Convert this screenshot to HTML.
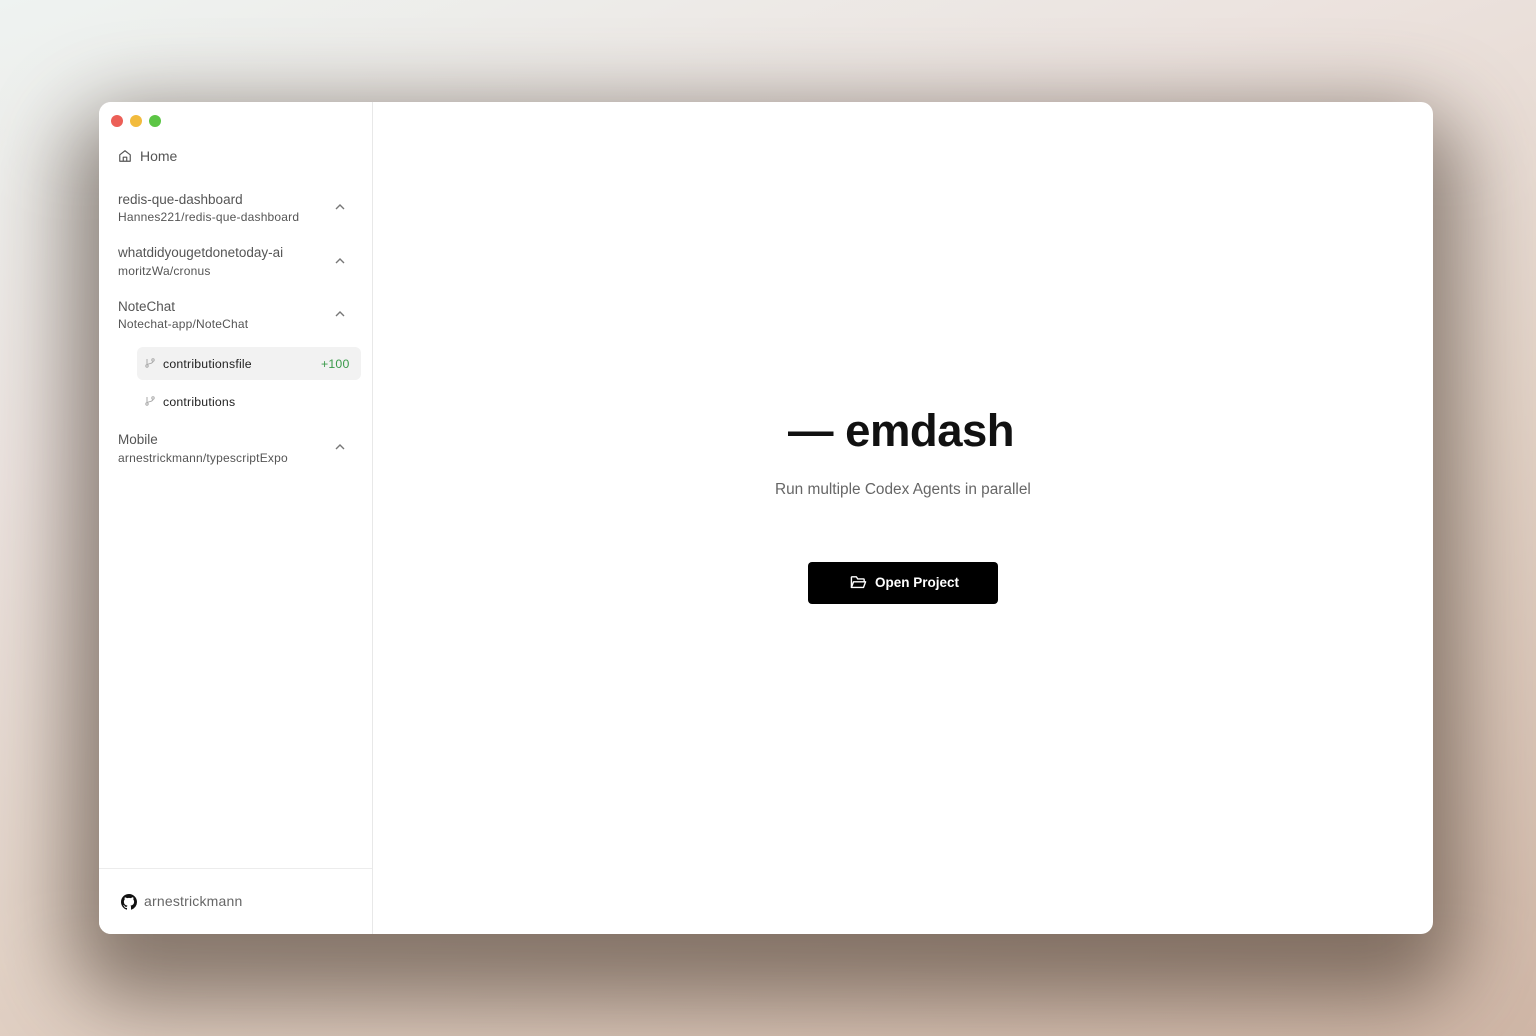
<!DOCTYPE html>
<html><head><meta charset="utf-8"><style>
html,body{margin:0;width:1536px;height:1036px;overflow:hidden;font-family:"Liberation Sans",sans-serif}
body{background:linear-gradient(160deg,#eef3f1 0%,#ece3df 30%,#e2d2c6 60%,#cfb6a6 100%);position:relative}
.shadow{position:absolute;left:70px;top:110px;width:1390px;height:890px;border-radius:60px;background:rgba(60,45,35,.55);filter:blur(40px)}
.win{position:absolute;left:99px;top:102px;width:1334px;height:832px;background:#fff;border-radius:12px;overflow:hidden}
.side{position:absolute;left:0;top:0;width:273px;height:832px;border-right:1px solid #e8e8e8;background:#fff}
.dot{position:absolute;top:13px;width:12px;height:12px;border-radius:50%}
.t{position:absolute;left:19px;color:#555;font-size:13.5px}
.s{position:absolute;left:19px;color:#555;font-size:12px;letter-spacing:0.2px}
.chev{position:absolute;left:236px;width:10px;height:6px}
.br{position:absolute;font-size:12.3px;color:#222;letter-spacing:0.2px}
</style></head><body>
<div class="shadow"></div>
<div class="win">
<div class="side">
<div class="dot" style="left:12px;background:#ec5f57"></div>
<div class="dot" style="left:31px;background:#f2bb3d"></div>
<div class="dot" style="left:50px;background:#5cc545"></div>
<svg style="position:absolute;left:19px;top:47px" width="14" height="14" viewBox="0 0 24 24" fill="none" stroke="#555" stroke-width="2" stroke-linejoin="round"><path d="M3 10l9-7 9 7v11H3z"/><path d="M9 21v-7h6v7"/></svg>
<div class="t" style="left:41px;top:46px;font-size:14px">Home</div>
<div class="t" style="top:90px">redis-que-dashboard</div>
<div class="s" style="top:108px">Hannes221/redis-que-dashboard</div>
<div class="t" style="top:143px">whatdidyougetdonetoday-ai</div>
<div class="s" style="top:162px">moritzWa/cronus</div>
<div class="t" style="top:197px">NoteChat</div>
<div class="s" style="top:215px">Notechat-app/NoteChat</div>
<div class="t" style="top:330px">Mobile</div>
<div class="s" style="top:349px">arnestrickmann/typescriptExpo</div>
<svg class="chev" style="top:102px" viewBox="0 0 10 6"><path d="M1 5l4-4 4 4" fill="none" stroke="#777" stroke-width="1.4"/></svg>
<svg class="chev" style="top:156px" viewBox="0 0 10 6"><path d="M1 5l4-4 4 4" fill="none" stroke="#777" stroke-width="1.4"/></svg>
<svg class="chev" style="top:209px" viewBox="0 0 10 6"><path d="M1 5l4-4 4 4" fill="none" stroke="#777" stroke-width="1.4"/></svg>
<svg class="chev" style="top:342px" viewBox="0 0 10 6"><path d="M1 5l4-4 4 4" fill="none" stroke="#777" stroke-width="1.4"/></svg>
<div style="position:absolute;left:38px;top:245px;width:224px;height:33px;background:#f2f2f2;border-radius:6px"></div>
<svg style="position:absolute;left:46px;top:256px" width="10" height="10" viewBox="0 0 10 10" fill="none" stroke="#aaa" stroke-width="1"><circle cx="2" cy="8" r="1.2"/><circle cx="8" cy="2" r="1.2"/><path d="M2 1v5.8M8 3.2c0 3-6 2-6 4"/></svg>
<div class="br" style="left:64px;top:255px">contributionsfile</div>
<div class="br" style="left:222px;top:255px;color:#3a9a4a">+100</div>
<svg style="position:absolute;left:46px;top:294px" width="10" height="10" viewBox="0 0 10 10" fill="none" stroke="#aaa" stroke-width="1"><circle cx="2" cy="8" r="1.2"/><circle cx="8" cy="2" r="1.2"/><path d="M2 1v5.8M8 3.2c0 3-6 2-6 4"/></svg>
<div class="br" style="left:64px;top:293px">contributions</div>
<div style="position:absolute;left:0;top:766px;width:273px;border-top:1px solid #ececec"></div>
<svg style="position:absolute;left:22px;top:792px" width="16" height="16" viewBox="0 0 16 16"><path fill="#111" d="M8 0C3.58 0 0 3.58 0 8c0 3.540 2.29 6.53 5.47 7.59.4.07.55-.17.55-.38v-1.33c-2.230.48-2.7-1.07-2.7-1.07-.36-.92-.89-1.17-.89-1.17-.73-.5.05-.49.05-.49.8.06 1.23.83 1.23.83.72 1.22 1.87.87 2.33.66.07-.52.28-.87.5-1.070-1.78-.2-3.64-.89-3.64-3.95 0-.87.31-1.59.82-2.15-.08-.2-.36-1.02.08-2.12 0 0 .67-.21 2.2.82A7.6 7.6 0 0 1 8 3.870c.68 0 1.36.09 2 .27 1.53-1.04 2.2-.82 2.2-.82.44 1.1.16 1.92.08 2.12.51.56.82 1.27.82 2.15 0 3.07-1.87 3.75-3.65 3.95.29.25.54.73.54 1.48v2.2c0 .21.15.46.55.38A8 8 0 0 0 16 8c0-4.42-3.58-8-8-8z"/></svg>
<div class="t" style="left:45px;top:791px;font-size:14px;color:#666;letter-spacing:0.2px">arnestrickmann</div>
</div>
<div style="position:absolute;left:689px;top:303px;font-size:45.5px;font-weight:bold;color:#111;letter-spacing:-0.5px">— emdash</div>
<div style="position:absolute;left:676px;top:379px;font-size:15.4px;color:#666">Run multiple Codex Agents in parallel</div>
<div style="position:absolute;left:709px;top:460px;width:190px;height:42px;background:#000;border-radius:4px;color:#fff;font-size:13.5px;font-weight:bold">
<svg style="position:absolute;left:42px;top:13px" width="17" height="15" viewBox="0 0 24 20" fill="none" stroke="#fff" stroke-width="2" stroke-linejoin="round"><path d="M2 17V3a1 1 0 0 1 1-1h6l2 3h8a1 1 0 0 1 1 1v3"/><path d="M2 17l3-8h17l-3 8z"/></svg>
<span style="position:absolute;left:67px;top:13px">Open Project</span>
</div>
</div>
</body></html>
